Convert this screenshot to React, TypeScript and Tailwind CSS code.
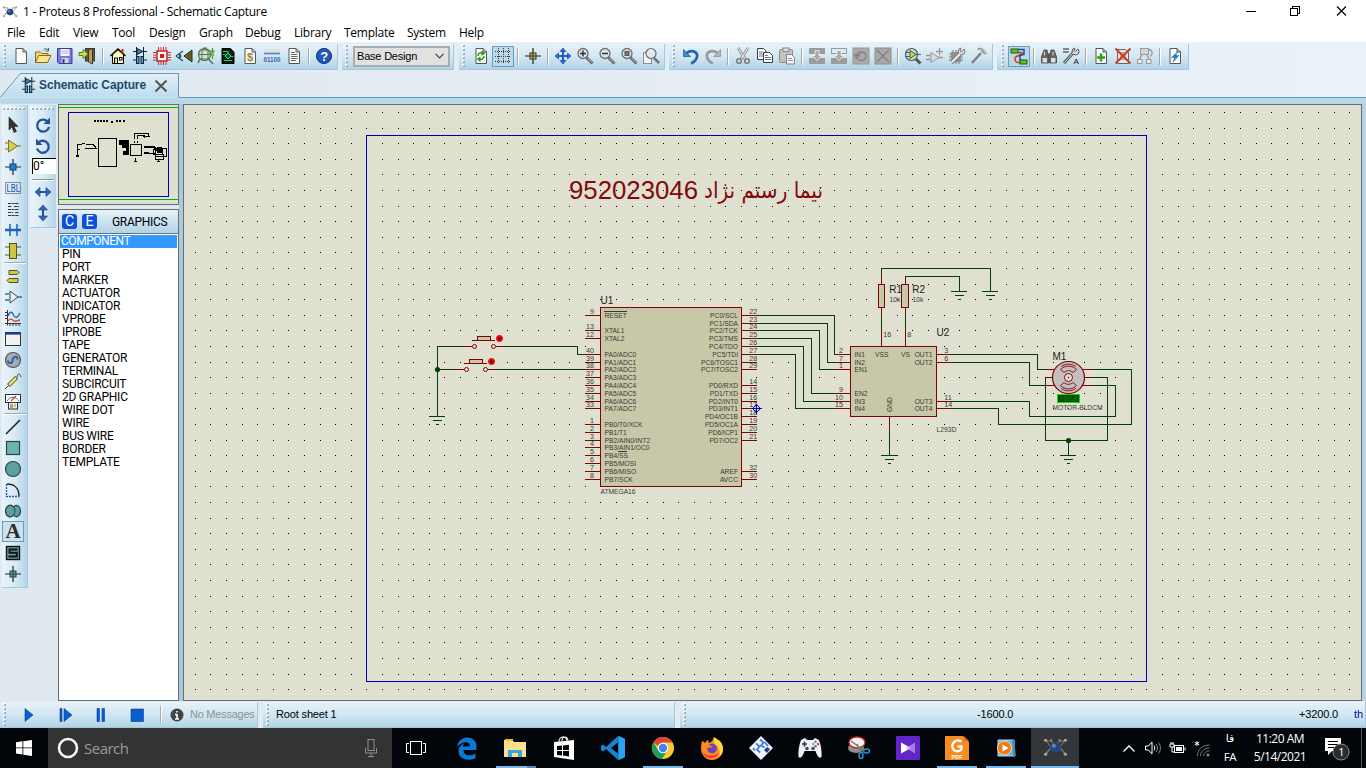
import React from "react";

type Kids = { children?: React.ReactNode };

function I({ children, s = 18 }: Kids & { s?: number }) {
  return (
    <svg width={s} height={s} viewBox="0 0 18 18" fill="none" className="block shrink-0">
      {children}
    </svg>
  );
}

function Slot({ children, on }: Kids & { on?: boolean }) {
  return (
    <div
      className={
        on
          ? "flex h-[21px] w-[22px] shrink-0 items-center justify-center border border-[#6a9dbd] bg-[#bcd9ea]"
          : "flex h-[21px] w-[22px] shrink-0 items-center justify-center"
      }
    >
      {children}
    </div>
  );
}

function Sep({ wide }: { wide?: boolean }) {
  return (
    <div className={wide ? "flex w-[9px] shrink-0 justify-center" : "flex w-2 shrink-0 justify-center"}>
      <div className="h-[17px] w-px bg-[#a6a9ab]" />
      <div className="h-[17px] w-px bg-white" />
    </div>
  );
}

function Grip({ h = 26 }: { h?: number }) {
  const n = Math.floor(h / 4);
  return (
    <svg width="4" height={h} className="block shrink-0" shapeRendering="crispEdges">
      {Array.from({ length: n }, (_, i) => (
        <g key={i}>
          <rect x="0" y={i * 4 + 1} width="2" height="2" fill="#fff" />
          <rect x="1" y={i * 4 + 2} width="2" height="2" fill="#9fb4c2" />
        </g>
      ))}
    </svg>
  );
}

function HGrip() {
  return (
    <svg width="24" height="4" className="block shrink-0" shapeRendering="crispEdges">
      {Array.from({ length: 6 }, (_, i) => (
        <g key={i}>
          <rect x={i * 4} y="0" width="2" height="2" fill="#fff" />
          <rect x={i * 4 + 1} y="1" width="2" height="2" fill="#9fb4c2" />
        </g>
      ))}
    </svg>
  );
}

function Bar({ children, className }: Kids & { className: string }) {
  return (
    <div
      className={
        "flex h-[26px] shrink-0 items-center border-r border-b border-[#a5c8de] bg-linear-to-b from-[#e6f2f9] via-[#d3e7f2] to-[#b2d3e6] " +
        className
      }
    >
      {children}
    </div>
  );
}

const page = (
  <path d="M4 1.5h7l3.500 3.500v11.500h-10.500zM11 1.500v3.500h3.500" fill="#fdfdfb" stroke="#555" />
);
const lens = (
  <>
    <path d="M10.500 10.500l6 6" stroke="#666" strokeWidth="3" />
    <path d="M11.500 11l4.500 4.500" stroke="#c9c1b0" strokeWidth="1" />
    <circle cx="7" cy="6.500" r="5" fill="#d9e3e6" stroke="#6a6f72" strokeWidth="1.300" />
  </>
);

const FileIcons = () => (
  <>
    <Slot><I>{page}</I></Slot>
    <Slot>
      <I>
        <path d="M1.500 15.500V5h5l1.500 1.500h6v3" fill="#f5d675" stroke="#8a6d1c" />
        <path d="M1.500 15.500l3-7h12.500l-3.500 7z" fill="#ffe48a" stroke="#8a6d1c" />
        <path d="M9 3.500c2-2.500 4.500-2 5.500 0M14.500 1v3h-3" stroke="#555" />
      </I>
    </Slot>
    <Slot>
      <I>
        <path d="M1.500 1.500h14.500v15h-13l-1.500-1.500z" fill="#7a78d8" stroke="#3d3b8f" />
        <rect x="4.500" y="2" width="9" height="7" fill="#f3f3ff" />
        <path d="M5.500 4h7M5.500 6h7" stroke="#b6b6dc" />
        <rect x="5.500" y="11" width="7" height="5" fill="#d6d6e4" />
        <rect x="6.500" y="12" width="2" height="4" fill="#3d3b8f" />
      </I>
    </Slot>
    <Slot>
      <I>
        <rect x="7.500" y="1.500" width="9" height="12.500" fill="#5c5648" stroke="#3b382f" />
        <path d="M10.500 3l4-1.500v15.500l-4-2z" fill="#b89a54" stroke="#3b382f" />
        <path d="M1 5.500h4v-3l5 4.500-5 4.500v-3h-4z" fill="#c6e04e" stroke="#5f7b12" />
      </I>
    </Slot>
    <Sep wide />
    <Slot>
      <I>
        <path d="M3.500 8v8.500h11v-8.500l-5.500-5z" fill="#fffbe0" stroke="#000" />
        <path d="M1.500 9l7.500-7 7.500 7" stroke="#000" strokeWidth="1.400" />
        <path d="M4.500 8l4.500-4 4.500 4" stroke="#f6e94e" strokeWidth="1.300" />
        <path d="M13.500 2v4" stroke="#d02020" strokeWidth="2" />
        <rect x="5.500" y="11" width="3" height="5.500" fill="#f6e94e" stroke="#000" />
        <rect x="10.500" y="10.500" width="2.500" height="2.500" fill="#fff" stroke="#000" />
      </I>
    </Slot>
    <Slot><SchIcon /></Slot>
    <Slot>
      <I>
        <rect x="4" y="4" width="10" height="10" fill="#fff" stroke="#d01818" strokeWidth="1.500" />
        <rect x="7" y="7" width="4" height="4" fill="#e01818" />
        <path d="M5.500 3v-3M8 3v-3M10.500 3v-3M13 3v-3M5.500 18v-3M8 18v-3M10.500 18v-3M13 18v-3M0 5.500h3M0 8h3M0 10.500h3M0 13h3M15 5.500h3M15 8h3M15 10.500h3M15 13h3" stroke="#d01818" strokeWidth=".9" />
      </I>
    </Slot>
    <Slot>
      <I>
        <path d="M17 3v12l-8-6z" fill="#1a8a2c" stroke="#0a3f12" />
        <path d="M15.500 5.500v7l-4-3.500z" fill="#d62020" />
        <path d="M1 9l7-5M1 9l7 5" stroke="#24506a" strokeWidth="1.200" />
        <path d="M4.500 6.500c2 1 2 4 0 5z" fill="#2d8fc2" stroke="#24506a" />
      </I>
    </Slot>
    <Slot>
      <I>
        <circle cx="7.500" cy="7.500" r="6" fill="#cfe7cf" stroke="#4d6a4d" strokeWidth="1.200" />
        <path d="M1 7.500h13M5 3v9h6v-9zM7 0v3M9 0v3" stroke="#5a735a" />
        <path d="M11.500 12l4.500 5M3 12l-2 4" stroke="#5a735a" strokeWidth="1.600" />
        <path d="M15.500 1v11M13 4h5" stroke="#2f8a2f" />
        <rect x="14" y="5" width="3" height="4" fill="#6fbf4f" />
      </I>
    </Slot>
    <Slot>
      <I>
        <path d="M3 1.500h8.500l3.500 3.500v11.500h-12z" fill="#101810" stroke="#000" />
        <path d="M4 4.500h5M4 7.500h2.500M11.500 9.500h3M5 13.500h8M9 4v2" stroke="#13e03b" strokeWidth="1.200" />
        <path d="M9 6l3 3-3 3-3-3z" stroke="#13e0c0" fill="#0b5a2a" />
      </I>
    </Slot>
    <Slot>
      <I>
        {page}
        <text x="6" y="14" fontSize="11" fontWeight="700" fill="#93822f" fontFamily="Liberation Sans, sans-serif">$</text>
      </I>
    </Slot>
    <Slot>
      <I>
        <rect x="1" y="2" width="16" height="4" fill="#e2e2e2" />
        <path d="M1 6.500h16" stroke="#4a7fd0" strokeWidth="1.600" />
        <text x="0.500" y="14.500" fontSize="6.500" fontWeight="700" fill="#3763b4" textLength="17" lengthAdjust="spacingAndGlyphs" fontFamily="Liberation Sans, sans-serif">01100</text>
      </I>
    </Slot>
    <Slot>
      <I>
        {page}
        <path d="M6 5.500h4M6 7.500h6.500M6 9.500h6.500M6 11.500h6.500M6 13.500h5" stroke="#666" />
      </I>
    </Slot>
    <Sep />
    <Slot>
      <I>
        <circle cx="9" cy="9" r="7.600" fill="#2456b8" stroke="#173c86" />
        <text x="5.200" y="13.600" fontSize="13" fontWeight="700" fill="#fff" fontFamily="Liberation Sans, sans-serif">?</text>
      </I>
    </Slot>
  </>
);

const schGlyph = (
  <>
    <path d="M2 4.500h14M5.500 0v9M12.500 0v9" stroke="#222" />
    <path d="M6 1.500v6l6-3z" fill="#2f86c8" stroke="#123" />
    <path d="M2 13h4M12 13h4" stroke="#222" />
    <rect x="5.500" y="9.500" width="2.500" height="7" fill="#49a2dc" stroke="#123" />
    <rect x="10" y="9.500" width="2.500" height="7" fill="#49a2dc" stroke="#123" />
  </>
);

function SchIcon() {
  return <I>{schGlyph}</I>;
}

const ViewIcons = () => (
  <>
    <Slot>
      <I>
        {page}
        <path d="M6 9c0-3 3-4 5-2.500M12 9c0 3-3 4.500-5 2.500" stroke="#2c9a24" strokeWidth="1.600" />
        <path d="M9.500 3.500l4 3-4 2.500zM8.500 9.500l-4 2.500 4 3z" fill="#2c9a24" />
      </I>
    </Slot>
    <Slot on>
      <I>
        <g stroke="#33404a" strokeDasharray="1 1">
          <path d="M1 4.500h16M1 9.500h16M1 14.500h16M4.500 1v16M9.500 1v16M14.500 1v16" />
        </g>
      </I>
    </Slot>
    <Sep />
    <Slot>
      <I>
        <path d="M1 9h16M9 1v16" stroke="#222" strokeWidth="1.200" />
        <rect x="6" y="6" width="6" height="6" fill="#c9c33a" stroke="#333" />
        <path d="M6 9h6M9 6v6" stroke="#333" />
      </I>
    </Slot>
    <Sep />
    <Slot>
      <I>
        <path d="M9 2v14M2 9h14" stroke="#1d5fd0" strokeWidth="2" />
        <path d="M9 1l3 3.500h-6zM9 17l3-3.500h-6zM1 9l3.500-3v6zM17 9l-3.500-3v6z" fill="#2b6fe0" stroke="#123f94" strokeWidth=".6" />
      </I>
    </Slot>
    <Slot><I>{lens}<path d="M4 6.500h6M7 3.500v6" stroke="#333" strokeWidth="1.500" /></I></Slot>
    <Slot><I>{lens}<path d="M4 6.500h6" stroke="#333" strokeWidth="1.500" /></I></Slot>
    <Slot><I>{lens}<rect x="5" y="4.500" width="4" height="4" fill="#777" stroke="#555" /></I></Slot>
    <Slot>
      <I>
        <rect x="1.500" y="5.500" width="8" height="11" fill="#f4f4f4" stroke="#333" strokeDasharray="1 1" />
        <path d="M12 11l5 5" stroke="#777" strokeWidth="2.500" />
        <circle cx="9" cy="6.500" r="5" fill="#e3eaec" stroke="#6a6f72" strokeWidth="1.200" />
      </I>
    </Slot>
  </>
);

const EditIcons = () => (
  <>
    <Slot>
      <I>
        <path d="M4 7c4-5 12-3 11 3-.5 3-3 5-6 6.500" stroke="#2467b0" strokeWidth="2.700" />
        <path d="M1.500 2.500v7h7z" fill="#3f8ad2" stroke="#1b4f8e" strokeWidth=".7" />
      </I>
    </Slot>
    <Slot>
      <I>
        <path d="M14 7c-4-5-12-3-11 3 .5 3 3 5 6 6.500" stroke="#9a9a9a" strokeWidth="2.700" />
        <path d="M16.500 2.500v7h-7z" fill="#b4b4b4" stroke="#8c8c8c" strokeWidth=".7" />
      </I>
    </Slot>
    <Sep />
    <Slot>
      <I>
        <path d="M4 1l7 11M14 1l-7 11" stroke="#858585" strokeWidth="2.600" />
        <path d="M4 1l7 11M14 1l-7 11" stroke="#e8e8e8" strokeWidth="1.200" />
        <circle cx="5" cy="14" r="2.300" stroke="#808080" strokeWidth="1.600" />
        <circle cx="13" cy="14" r="2.300" stroke="#808080" strokeWidth="1.600" />
      </I>
    </Slot>
    <Slot>
      <I>
        <path d="M1.500 1.500h6l2.500 2.500v8.500h-8.500z" fill="#fff" stroke="#34404e" />
        <path d="M3 5h4M3 7h5M3 9h5" stroke="#6c7885" />
        <path d="M7.500 5.500h6l3 3v7h-9z" fill="#fff" stroke="#34404e" />
        <path d="M9 8.500h3M9 10.500h6M9 12.500h6" stroke="#6c7885" />
      </I>
    </Slot>
    <Slot>
      <I>
        <rect x="1.500" y="2.500" width="13" height="13" rx="1" fill="#c2c2c2" stroke="#8a8a8a" />
        <rect x="5" y="1" width="6" height="3.500" fill="#ddd" stroke="#888" />
        <path d="M8.500 7.500h5l3 3v6.500h-8z" fill="#f3f3f3" stroke="#888" />
        <path d="M10 11.500h4M10 13.500h5" stroke="#999" />
      </I>
    </Slot>
    <Sep />
    <Slot>
      <I>
        <path d="M1 1h16v6h-16zM1 11h16v6h-16z" fill="#9b9b9b" />
        <path d="M7 3.500h4v5h3l-5 5-5-5h3z" fill="#a8a8a8" stroke="#eee" strokeWidth=".9" />
      </I>
    </Slot>
    <Slot>
      <I>
        <path d="M1.500 1.500h15v5h-15z" stroke="#999" />
        <path d="M1 11h16v6h-16z" fill="#9b9b9b" />
        <path d="M7 3.500h4v5h3l-5 5-5-5h3z" fill="#a8a8a8" stroke="#eee" strokeWidth=".9" />
      </I>
    </Slot>
    <Slot>
      <I>
        <rect x="1" y="1" width="16" height="16" fill="#a9a9a9" stroke="#999" />
        <path d="M5 9c0-5 9-5 9 0s-6 5-8 3.500M2.500 8h5l-2.500 3.500z" stroke="#828282" strokeWidth="1.300" />
      </I>
    </Slot>
    <Slot>
      <I>
        <rect x="1" y="1" width="16" height="16" fill="#a9a9a9" stroke="#8c8c8c" />
        <path d="M3 3l12 12M15 3l-12 12" stroke="#808080" strokeWidth="1.300" />
      </I>
    </Slot>
    <Sep />
    <Slot>
      <I>
        <path d="M11.500 11.500l5 5" stroke="#555" strokeWidth="3" />
        <circle cx="7.500" cy="7.500" r="6" fill="#c3dfe4" stroke="#4a6068" strokeWidth="1.200" />
        <path d="M6 3.500v8l6-4z" fill="#d8cf50" stroke="#5f5a1a" />
        <path d="M1 5.500h5M1 9.500h5M12 7.500h5" stroke="#44606a" />
      </I>
    </Slot>
    <Slot>
      <I>
        <path d="M5 5.500v10l8-5z" fill="#ddd" stroke="#999" />
        <path d="M0 8.500h5M0 12.500h5M12 10.500h5M13.500 1v7M10 4.500h7" stroke="#999" strokeWidth="1.300" />
      </I>
    </Slot>
    <Slot>
      <I>
        <rect x="3" y="5" width="10" height="10" fill="#8d8d8d" />
        <path d="M1 7h2M1 10h2M1 13h2M13 10h2M13 13h2M5 15v2M8 15v2M11 15v2M5 3v2M8 3v2" stroke="#777" />
        <path d="M4 15l8-8" stroke="#777" strokeWidth="4" />
        <path d="M16 2l-2.500 3-1.500-1 1-3a3.500 3.500 0 1 0 4 3z" fill="#ddd" stroke="#777" />
        <path d="M4 15l8-8" stroke="#eee" strokeWidth="2.200" />
      </I>
    </Slot>
    <Slot>
      <I>
        <path d="M2 16l9-10" stroke="#7f7f7f" strokeWidth="2.400" />
        <path d="M8 2.500c3-1.500 5-.5 8 4.500M11 2l3.500 4" stroke="#8a8a8a" strokeWidth="2.300" />
        <path d="M9 2.500c3-1 4 0 7 4" stroke="#ddd" />
      </I>
    </Slot>
  </>
);

const ToolIcons = () => (
  <>
    <Slot on>
      <I>
        <path d="M8 5.500h3c3 0 2 3 0 3s-6 0-6 3.500 2 3.500 5 3.500" stroke="#d43b12" strokeWidth="1.500" />
        <path d="M8 2.500h6v5h-4v6h3" stroke="#1452b0" strokeWidth="1.500" />
        <rect x="1" y="2" width="7" height="4" fill="#5fc02d" stroke="#1d5c0c" />
        <rect x="10" y="13" width="7" height="4" fill="#5fc02d" stroke="#1d5c0c" />
      </I>
    </Slot>
    <Sep />
    <Slot>
      <I>
        <path d="M4 3h3l1.500 7v6h-7v-6zM11 3h3l2.500 7v6h-7v-6z" fill="#666" stroke="#444" strokeWidth=".8" />
        <path d="M7.500 6.500h3v4h-3z" fill="#555" />
        <rect x="2.500" y="11" width="4.500" height="4.500" fill="#ddd" />
        <rect x="11" y="11" width="4.500" height="4.500" fill="#ddd" />
        <path d="M4.500 4.500v4M13 4.500v4" stroke="#ddd" />
      </I>
    </Slot>
    <Slot>
      <I>
        <path d="M1 2h6M1 5h6" stroke="#222" strokeWidth="1.200" />
        <path d="M2 16l9-10" stroke="#555" strokeWidth="3" />
        <path d="M16 2l-2.500 2.500-1.500-1 1-2.500a3.500 3.500 0 1 0 4 3z" fill="#ddd" stroke="#555" />
        <path d="M2.500 15.500l9-10" stroke="#e4e4e4" />
        <text x="11.500" y="17" fontSize="8" fill="#111" fontFamily="Liberation Sans, sans-serif">A</text>
      </I>
    </Slot>
    <Sep />
    <Slot><I>{page}<path d="M9 6.500v8M5 10.500h8" stroke="#2fa01a" strokeWidth="2.600" /></I></Slot>
    <Slot>
      <I>
        <path d="M3.500 2.500h8l3 3v11h-11z" fill="#e8e8e8" stroke="#666" />
        <path d="M6 6h5M6 9h6M6 12h6" stroke="#777" />
        <path d="M1.500 1.500l15 15M16.500 1.500l-15 15" stroke="#cf3b22" strokeWidth="2" />
      </I>
    </Slot>
    <Slot>
      <I>
        <rect x="4.500" y="1.500" width="8" height="6" fill="#d5d5d5" stroke="#999" />
        <rect x="1.500" y="12.500" width="4.500" height="4" fill="#eee" stroke="#999" />
        <rect x="10.500" y="12.500" width="4.500" height="4" fill="#eee" stroke="#999" />
        <path d="M6 8l-2.500 4M11 8l2 4M13 2.500c4 1 4 5 1 7" stroke="#999" strokeWidth="1.300" />
      </I>
    </Slot>
    <Sep />
    <Slot><I>{page}<path d="M12 4.500l-6.500 6h3.500l-2 4.500 6-6.500h-3.500z" fill="#1f7fd8" stroke="#1565b0" strokeWidth=".5" /></I></Slot>
  </>
);

function VSlot({ children, on }: Kids & { on?: boolean }) {
  return (
    <div className={on ? "flex h-[21px] w-[22px] items-center justify-center border border-[#6a9dbd] bg-[#cbe1ee]" : "flex h-[21px] w-[22px] items-center justify-center"}>
      {children}
    </div>
  );
}
const VSep = () => (
  <div className="flex h-1 w-full flex-col justify-center pl-0.5">
    <div className="h-px w-[22px] bg-[#a6a9ab]" />
    <div className="h-px w-[22px] bg-white" />
  </div>
);

const teal = "#5f9f9f";
const ModeBar = () => (
  <div className="ml-0.5 flex h-[483px] w-[26px] flex-col items-start border-r border-b border-[#a5c8de] bg-linear-to-r from-[#eaf4fa] via-[#d8eaf4] to-[#b4d5e9] pt-[2px]">
    <HGrip />
    <div className="h-[3px]" />
    <VSlot><I><path d="M5 1v13l3-3 2 5.500 2.500-1-2.500-5h4z" fill="#333" stroke="#222" strokeWidth=".6" /></I></VSlot>
    <VSlot><I><path d="M4.500 3v12l9-6z" fill="#d8cf50" stroke="#7b7420" /><path d="M1 6h4M1 12h4M13 9h4" stroke="#7b7420" strokeWidth="1.200" /></I></VSlot>
    <VSlot><I><path d="M1 9h16M9 1v16" stroke="#1d2d3a" strokeWidth="1.200" /><rect x="6" y="6" width="6" height="6" fill="#2d7bd0" stroke="#123f80" /></I></VSlot>
    <VSlot>
      <I>
        <rect x="1.500" y="3.500" width="15" height="11" stroke="#333" strokeDasharray="1 1" />
        <text x="2.500" y="13" fontSize="10.500" fill="#1454a8" textLength="13.500" lengthAdjust="spacingAndGlyphs" fontFamily="Roboto, sans-serif">LBL</text>
      </I>
    </VSlot>
    <VSlot><I><path d="M4 3.500h11M4 6.500h4M10 6.500h5M4 9.500h11M4 12.500h5M11 12.500h4M4 15.500h11" stroke="#333" strokeDasharray="3 .6" /></I></VSlot>
    <VSlot><I><path d="M1 9h16" stroke="#1c63b4" strokeWidth="2.500" /><path d="M6 3v6M13 3v6M6 9v6M13 9v6" stroke="#1c63b4" strokeWidth="1.500" /></I></VSlot>
    <VSlot><I><rect x="5.500" y="1.500" width="7" height="15" fill="#cdc548" stroke="#56521c" /><path d="M1 5h4M1 13h4M13 5h4M13 13h4" stroke="#56521c" /></I></VSlot>
    <VSep />
    <VSlot><I><path d="M5 3.500h8l2 2-2 2h-8zM14 11.500h-9l-2 2 2 2h9z" fill="#d2ca45" stroke="#56521c" /></I></VSlot>
    <VSlot><I><path d="M6 3v12l8-6z" fill="#e9eef2" stroke="#445" /><path d="M1 6h4M1 12h4M14 9h4" stroke="#1a8585" strokeWidth="1.300" /></I></VSlot>
    <VSlot>
      <I>
        <path d="M3.500 1v15.500M1 14.500h16" stroke="#333" />
        <path d="M1 3.500h2M1 6.500h2M1 9.500h2M6 17v-2M9 17v-2M12 17v-2M15 17v-2" stroke="#333" />
        <path d="M4 7c2-5 4-5 6 0 2 3 4 1 6-3" stroke="#1f5fb8" strokeWidth="1.300" />
        <path d="M4 12c2-3 4-2 6 0 2 1 4-1 6-1" stroke="#cf4a2c" strokeWidth="1.300" />
      </I>
    </VSlot>
    <VSlot><I><rect x="1.500" y="2.500" width="15" height="13" fill="#f1f1f1" stroke="#333" /><path d="M1 3.500h16" stroke="#123f94" strokeWidth="2.200" /></I></VSlot>
    <VSlot><I><circle cx="9" cy="9" r="7.500" fill="#a7aab4" stroke="#555" strokeWidth="1.200" /><path d="M4 9.500c0 3.500 4.500 3.500 4.500 0s5-6 5-1" stroke="#1f5fb8" strokeWidth="1.800" /></I></VSlot>
    <VSlot><I><path d="M1 17l4-4M13 6c0-5 3-5 4-1" stroke="#444" /><path d="M4.500 13.500l8-8" stroke="#4d4a20" strokeWidth="4" /><path d="M5 13l7-7" stroke="#e9e270" strokeWidth="2.500" /></I></VSlot>
    <VSlot>
      <I>
        <rect x="1.500" y="1.500" width="15" height="8" fill="#fff" stroke="#333" />
        <path d="M3 8c3-5 9-5 12 0" stroke="#2b7bc8" /><path d="M7 8l5-5" stroke="#d03a20" strokeWidth="1.300" />
        <rect x="4.500" y="9.500" width="9" height="6.500" fill="#eee" stroke="#333" />
        <path d="M6 12h3M6 14h3" stroke="#555" /><rect x="10" y="11" width="2" height="3" fill="#e0c030" />
      </I>
    </VSlot>
    <VSep />
    <VSlot><I><path d="M2 16l14-14" stroke="#222" strokeWidth="1.600" /></I></VSlot>
    <VSlot><I><rect x="2.500" y="2.500" width="13" height="13" fill="#6fb3ad" stroke="#24494a" strokeWidth="1.200" /></I></VSlot>
    <VSlot><I><circle cx="9" cy="9" r="7.500" fill={teal} stroke="#24494a" strokeWidth="1.200" /></I></VSlot>
    <VSlot><I><path d="M3 3c7 0 12 4 12 12" stroke="#222" strokeWidth="1.400" /><path d="M2.500 3v12.500h13" stroke="#1f5fb8" strokeWidth="1.400" strokeDasharray="2 1" /></I></VSlot>
    <VSlot><I><path d="M9.500 5c-3-4-8-1-8 4s5 8 8 4c2.500 3.500 7 1 7-4s-4.500-7.500-7-4z" fill={teal} stroke="#24494a" strokeWidth="1.200" /><path d="M9.500 5c2 2 2 6 0 8" stroke="#24494a" /></I></VSlot>
    <VSlot on><span className="font-['Liberation_Serif',serif] text-[21px] leading-none font-bold text-[#2b2b2b]">A</span></VSlot>
    <VSlot><I><rect x="2.500" y="2.500" width="13" height="13" fill={teal} stroke="#111" strokeWidth="1.400" /><path d="M13.500 5.500h-8v3.300h7.300v3.700h-8.300" stroke="#111" strokeWidth="1.900" /></I></VSlot>
    <VSlot><I><path d="M1 9h16M9 1v16" stroke="#222" strokeWidth="1.200" /><rect x="6" y="6" width="6" height="6" fill={teal} stroke="#24494a" /><path d="M6 9h6M9 6v6" stroke="#24494a" /></I></VSlot>
  </div>
);

const RotateBar = () => (
  <div className="ml-0.5 flex h-[123px] w-[26px] flex-col items-center border-b border-[#a5c8de] bg-linear-to-r from-[#eaf4fa] via-[#d8eaf4] to-[#b4d5e9] pt-[2px]">
    <HGrip />
    <div className="h-[3px]" />
    <VSlot><I><path d="M13.500 5.500a6 6 0 1 0 1.500 5.500" stroke="#24509c" strokeWidth="2.300" /><path d="M16 1.500v6.500h-6.500z" fill="#24509c" /></I></VSlot>
    <VSlot><I><path d="M4.500 5.500a6 6 0 1 1-1.500 6" stroke="#24509c" strokeWidth="2.300" /><path d="M2 1.500v6.500h6.500z" fill="#24509c" /></I></VSlot>
    <div className="mt-0.5 ml-0.5 h-4 w-6 border-t border-l border-black bg-white font-['Roboto',sans-serif] text-[12px] leading-[15px]">0°</div>
    <div className="mt-[5px] h-px w-[22px] bg-[#8f9396]" />
    <div className="h-px w-[22px] bg-white" />
    <VSlot><I><path d="M4 9h10" stroke="#24509c" strokeWidth="2" /><path d="M1 9l5-4.500v9zM17 9l-5-4.500v9z" fill="#2f66c0" stroke="#1a3d80" strokeWidth=".6" /></I></VSlot>
    <VSlot><I><path d="M9 4v10" stroke="#24509c" strokeWidth="2" /><path d="M9 1l4.500 5h-9zM9 17l4.500-5h-9z" fill="#2f66c0" stroke="#1a3d80" strokeWidth=".6" /></I></VSlot>
  </div>
);

const Overview = () => (
  <svg width="119" height="99" viewBox="59 105 119 99" className="block" shapeRendering="crispEdges" fill="none">
    <rect x="59" y="105" width="119" height="99" fill="#e0e0d0" />
    <path d="M59 107.500h119M59 199.500h119" stroke="#00b400" />
    <rect x="68.500" y="112.500" width="100" height="84" stroke="#0000b4" />
    <path d="M94 120.500h15M111 121.500h3M116 120.500h5M123 120.500h3" stroke="#000" strokeWidth="2" strokeDasharray="2 1" />
    <rect x="98.500" y="138.500" width="18" height="28" stroke="#000" />
    <path d="M77.500 157v-13h4M86 144.500h7l3 3M77 149.500h3M85 148.500h12M82 143.500h3" stroke="#000" />
    <rect x="76" y="155" width="3" height="2" fill="#000" />
    <path d="M119 140h10v15h-6v-4h3v-3h-4v-3h-3z" fill="#000" />
    <rect x="130.500" y="144.500" width="11" height="11" stroke="#000" />
    <path d="M134.500 139v-6h14v4M137.500 139v-4h7v3M134.500 141v2M137.500 141v2M135.500 158v4M134 161.500h3M143 136.500h7" stroke="#000" />
    <path d="M144 147h10l2 3h4M144 153h5" stroke="#000" strokeWidth="2" />
    <path d="M149 153.500h6" stroke="#000" />
    <rect x="155.500" y="148.500" width="11" height="8" stroke="#000" />
    <rect x="153.500" y="149.500" width="9" height="5" stroke="#000" />
    <rect x="157" y="147" width="5" height="6" fill="#000" />
    <path d="M155.500 154v5h8v-5M158.500 159v3M157 161.500h3" stroke="#000" />
  </svg>
);

const objects = ["COMPONENT", "PIN", "PORT", "MARKER", "ACTUATOR", "INDICATOR", "VPROBE", "IPROBE", "TAPE", "GENERATOR", "TERMINAL", "SUBCIRCUIT", "2D GRAPHIC", "WIRE DOT", "WIRE", "BUS WIRE", "BORDER", "TEMPLATE"];

/* ---------- schematic ---------- */
const RED = "#7d0505";
const GREEN = "#044004";
const INK = "#3a3a33";

const gy = (k: number) => Math.floor(315.25 + 7.8 * k);

const dots = (() => {
  let d = "";
  for (let i = -11; i <= 63; i++)
    for (let j = 0; j <= 37; j++)
      d += `M${Math.floor(366.8 + i * 15.6)} ${Math.floor(112.45 + j * 15.6)}h1v1h-1z`;
  return d;
})();

type Pin = [number, string, string];
const left: Pin[] = [
  [0, "9", "RESET"], [2, "13", "XTAL1"], [3, "12", "XTAL2"],
  [5, "40", "PA0/ADC0"], [6, "39", "PA1/ADC1"], [7, "38", "PA2/ADC2"], [8, "37", "PA3/ADC3"],
  [9, "36", "PA4/ADC4"], [10, "35", "PA5/ADC5"], [11, "34", "PA6/ADC6"], [12, "33", "PA7/ADC7"],
  [14, "1", "PB0/T0/XCK"], [15, "2", "PB1/T1"], [16, "3", "PB2/AIN0/INT2"], [17, "4", "PB3/AIN1/OC0"],
  [18, "5", "PB4/SS"], [19, "6", "PB5/MOSI"], [20, "7", "PB6/MISO"], [21, "8", "PB7/SCK"],
];
const right: Pin[] = [
  [0, "22", "PC0/SCL"], [1, "23", "PC1/SDA"], [2, "24", "PC2/TCK"], [3, "25", "PC3/TMS"],
  [4, "26", "PC4/TDO"], [5, "27", "PC5/TDI"], [6, "28", "PC6/TOSC1"], [7, "29", "PC7/TOSC2"],
  [9, "14", "PD0/RXD"], [10, "15", "PD1/TXD"], [11, "16", "PD2/INT0"], [12, "17", "PD3/INT1"],
  [13, "18", "PD4/OC1B"], [14, "19", "PD5/OC1A"], [15, "20", "PD6/ICP1"], [16, "21", "PD7/OC2"],
  [20, "32", "AREF"], [21, "30", "AVCC"],
];
const l293: Pin[] = [[5, "2", "IN1"], [6, "7", "IN2"], [7, "1", "EN1"], [10, "9", "EN2"], [11, "10", "IN3"], [12, "15", "IN4"]];
const r293: Pin[] = [[5, "3", "OUT1"], [6, "6", "OUT2"], [11, "11", "OUT3"], [12, "14", "OUT4"]];

function Gnd({ x, y }: { x: number; y: number }) {
  return <path d={`M${x - 8} ${y + 0.5}h16M${x - 4} ${y + 4.5}h9M${x - 1} ${y + 8.5}h3`} stroke={GREEN} />;
}

function PushButton({ x, y }: { x: number; y: number }) {
  return (
    <g stroke={RED}>
      <path d={`M${x - 11} ${y + 0.5}h9M${x + 22} ${y + 0.5}h8M${x - 2} ${y - 5.5}h23`} />
      <rect x={x + 3.5} y={y - 9.5} width="13" height="4" fill="#c8c8a9" />
      <g shapeRendering="auto">
        <circle cx={x + 0.5} cy={y + 0.5} r="2" fill="#e4e0d0" />
        <circle cx={x + 19.5} cy={y + 0.5} r="2" fill="#e4e0d0" />
        <circle cx={x + 25.5} cy={y - 7.5} r="3" fill="#f01010" stroke="#e00000" />
        <circle cx={x + 25.5} cy={y - 7.5} r="1.4" fill="#500" stroke="none" />
      </g>
    </g>
  );
}

const Schematic = () => (
  <svg width="1177" height="595" viewBox="184 105 1177 595" className="block" fill="none" shapeRendering="crispEdges" fontFamily="Liberation Sans, Arial, sans-serif">
    <rect x="184" y="105" width="1177" height="595" fill="#e0e0d0" />
    <path d={dots} fill="#000" />
    <rect x="366.500" y="135.500" width="780" height="546" stroke="#0000b4" />
    <text x="569" y="199" fontSize="26" fill="#82080c" textLength="129" lengthAdjust="spacingAndGlyphs">952023046</text>
    <text x="823" y="198" fontSize="23" fill="#82080c" direction="rtl" textLength="119" lengthAdjust="spacingAndGlyphs" fontFamily="DejaVu Sans, sans-serif">نیما رستم نژاد</text>

    <g stroke={GREEN}>
      <path d="M464 346.500H437.500V416M437 369.500H456M504 346.500H577.500V354.500H585M496 369.500H585" />
      <path d="M757 315.500H834.500V354.500M757 323.500H827.500V362.500H835M757 330.500H819.500V369.500H835M757 338.500H811.500V393.500H835M757 346.500H803.500V401.500H835M757 354.500H795.500V408.500H835" />
      <path d="M881.500 276V268.500H990.500V291M905 276.500H959.500V291M881.500 315V330M905.500 315V330M889.500 431V455" />
      <path d="M951 354.500H1037.500V369.500H1045M951 362.500H1029.500V385.500H1045M951 401.500H1029.500V416.500H1115.500V385.500H1093M951 408.500H998.500V424.500H1131.500V369.500H1093M1046 377.500H1045.500V440.500H1107.500V377.500H1093M1068.500 440V455" />
    </g>
    <Gnd x={437} y={416} /><Gnd x={959} y={291} /><Gnd x={990} y={291} /><Gnd x={889} y={455} /><Gnd x={1068} y={455} />
    <g shapeRendering="auto" fill={GREEN}>
      <circle cx="437.500" cy="369.500" r="2.600" /><circle cx="1068.500" cy="440.500" r="2.600" />
    </g>
    <PushButton x={474} y={346} />
    <PushButton x={466} y={369} />

    <g stroke={RED}>
      <rect x="600.500" y="307.500" width="141" height="179" fill="#c8c8a9" />
      <rect x="850.500" y="346.500" width="86" height="70" fill="#c8c8a9" />
      {left.map(([k]) => <path key={k} d={`M585 ${gy(k) + 0.5}h15`} />)}
      {right.map(([k]) => <path key={k} d={`M742 ${gy(k) + 0.5}h15`} />)}
      {l293.map(([k]) => <path key={k} d={`M835 ${gy(k) + 0.5}h15`} />)}
      {r293.map(([k]) => <path key={k} d={`M937 ${gy(k) + 0.5}h15`} />)}
      <path d="M881.500 276v8M905.500 276v8M881.500 307v8M905.500 307v8M881.500 330v16M905.500 330v16M889.500 417v14" />
      <rect x="878.500" y="284.500" width="6" height="23" fill="#c8c8a9" />
      <rect x="901.500" y="284.500" width="7" height="23" fill="#c8c8a9" />
      <path d="M1045 369.500h10M1045 377.500h8M1045 385.500h10M1083 369.500h10M1084 377.500h9M1083 385.500h10" />
    </g>

    <g fontSize="6.700" fill={INK}>
      {left.map(([k, n, t]) => (
        <g key={k}>
          <text x="594" y={gy(k) - 0.8} textAnchor="end" fontSize="7.200">{n}</text>
          <text x="604.500" y={gy(k) + 3}>{t}</text>
        </g>
      ))}
      {right.map(([k, n, t]) => (
        <g key={k}>
          <text x="757.300" y={gy(k) - 0.8} textAnchor="end" fontSize="7.200">{n}</text>
          <text x="738" y={gy(k) + 3} textAnchor="end">{t}</text>
        </g>
      ))}
      {l293.map(([k, n, t]) => (
        <g key={k}>
          <text x="843" y={gy(k) - 0.8} textAnchor="end" fontSize="7.200">{n}</text>
          <text x="854.500" y={gy(k) + 3}>{t}</text>
        </g>
      ))}
      {r293.map(([k, n, t]) => (
        <g key={k}>
          <text x="944.300" y={gy(k) - 0.8} fontSize="7.200">{n}</text>
          <text x="932.500" y={gy(k) + 3} textAnchor="end">{t}</text>
        </g>
      ))}
      <path d="M604 311.500h23M618 451.500h9" stroke={INK} />
      <text x="875" y="357">VSS</text>
      <text x="901" y="357">VS</text>
      <text x="883.300" y="336.700" fontSize="7.200">16</text>
      <text x="907.300" y="336.700" fontSize="7.200">8</text>
      <text transform="translate(892.300 412) rotate(-90)">GND</text>
      <text x="889.500" y="301.800">10k</text>
      <text x="912.500" y="301.800">10k</text>
      <text x="600.500" y="493.800" textLength="35">ATMEGA16</text>
      <text x="936.500" y="431.800" textLength="20">L293D</text>
      <text x="1052.500" y="410" textLength="50">MOTOR-BLDCM</text>
    </g>
    <g fontSize="10" fill="#1c1c18">
      <text x="600.500" y="304">U1</text>
      <text x="889.300" y="293">R1</text>
      <text x="912.300" y="293">R2</text>
      <text x="936.500" y="336">U2</text>
      <text x="1052.500" y="359.500">M1</text>
    </g>

    <g shapeRendering="auto" stroke={RED}>
      <circle cx="1068.500" cy="377.500" r="16" fill="#c4c0c2" strokeWidth="1.200" />
      <path d="M1060.500 369.500c4-4.500 12-4.500 16 0l-3.500 3c-3-2.500-6-2.500-9 0zM1060.500 385.500c4 4.500 12 4.500 16 0l-3.500-3c-3 2.500-6 2.500-9 0z" strokeWidth=".9" />
      <path d="M1061 366.500c4-3 11-3 15 0M1061 388.500c4 3 11 3 15 0" strokeWidth=".9" />
      <circle cx="1068.500" cy="377.500" r="4" fill="#e6e2da" />
      <path d="M1067.500 377.500h2M1068.500 376.500v2" strokeWidth=".6" />
    </g>
    <rect x="1057.500" y="394.500" width="22" height="8" fill="#064806" stroke="#0be00b" />
    <text x="1060" y="401" fontSize="6.700" fill="#138013" textLength="17">+88.8</text>
    <path d="M756.500 404.500l4 4-4 4-4-4zM752 408.500h10M756.500 404v10" stroke="#0000b4" shapeRendering="auto" />
  </svg>
);

/* ---------- taskbar ---------- */
function Task({ children, line }: Kids & { line?: boolean }) {
  return (
    <div className="relative flex h-10 w-[49px] shrink-0 items-center justify-center">
      {children}
      {line && <div className="absolute bottom-0 left-[5px] h-0.5 w-10 bg-[#76b9ed]" />}
    </div>
  );
}
const T = ({ children }: Kids) => (
  <svg width="24" height="24" viewBox="0 0 24 24" fill="none" className="block">{children}</svg>
);
const Atom = ({ s, dark }: { s: number; dark?: boolean }) => (
  <svg width={s} height={s} viewBox="0 0 24 24" fill="none" className="block">
    <g stroke={dark ? "#70757c" : "#8a8f96"} strokeWidth="1.100">
      <path d="M2 5c6 0 14 6 20 13M22 5c-6 0-14 6-20 13M3 4c3 8 6 9 9 9s7-3 9-9M3 19c3-6 6-7 9-7s7 2 9 7" />
    </g>
    <circle cx="12" cy="12" r="5" fill="#26457c" />
    <circle cx="10.500" cy="10.500" r="2" fill="#5b7fb8" />
    <g fill="#c9a268"><circle cx="2.500" cy="5" r="1.500" /><circle cx="21.500" cy="5" r="1.500" /><circle cx="2.500" cy="18.500" r="1.500" /><circle cx="21.500" cy="18.500" r="1.500" /><circle cx="8" cy="5" r="1" /><circle cx="16" cy="5" r="1" /></g>
  </svg>
);

const Taskbar = () => (
  <div className="flex h-10 w-full shrink-0 items-center bg-[#020509] font-['Open_Sans',sans-serif] text-white">
    <div className="flex w-12 shrink-0 justify-center">
      <svg width="16" height="16" viewBox="0 0 16 16" fill="#fff"><path d="M0 2.200l6.500-.9v6.200h-6.500zM7.300 1.200l8.700-1.200v7.500h-8.700zM0 8.300h6.500v6.200l-6.500-.9zM7.300 8.300h8.700v7.600l-8.700-1.200z" /></svg>
    </div>
    <div className="flex h-10 w-[344px] shrink-0 items-center bg-[#333333] pl-[9px]">
      <svg width="22" height="22" viewBox="0 0 22 22"><circle cx="11" cy="11" r="9" fill="none" stroke="#f4f4f4" strokeWidth="2.600" /></svg>
      <span className="ml-[5px] text-[15px] leading-5 tracking-[-0.5px] text-[#9b9b9b]">Search</span>
      <svg width="12" height="18" viewBox="0 0 12 18" fill="none" stroke="#8f8f8f" className="mr-[15px] ml-auto"><rect x="3" y=".5" width="6" height="11" /><path d="M.5 9v5h11v-5M6 14v3M3 17.500h6" /></svg>
    </div>
    <Task>
      <svg width="20" height="16" viewBox="0 0 20 16" fill="none" stroke="#fff" className="mr-px"><rect x="4.500" y="1.500" width="11" height="13" /><path d="M3 3.500h-2.500v9h2.500M17 3.500h2.500v9h-2.500" /></svg>
    </Task>
    <Task>
      <T><path d="M3 11C4 4 9 1.500 13.500 1.500c6 0 9 4.500 9 9.500v3h-13c0 6 7 6.500 12 3.500v4.500c-6 3.500-17 2-17-7 0-4 2.500-6.500 6-7.800-1 1-1.700 2-2 3.300h7.500c0-6-8.500-5.500-13 .5z" fill="#0b78d4" /></T>
    </Task>
    <div className="relative flex h-10 w-[49px] shrink-0 items-center justify-center">
      <T>
        <path d="M1 4h8l2 2h12v15h-22z" fill="#fbe08d" /><path d="M2 3h8v2h-8z" fill="#f2b827" />
        <path d="M5 21v-7h14v7h-4v-4h-6v4z" fill="#36a6dc" />
      </T>
      <div className="absolute bottom-0 left-[6px] flex h-0.5 w-10"><div className="w-[31px] bg-[#76b9ed]" /><div className="w-[9px] bg-[#5589b2]" /></div>
    </div>
    <Task>
      <T>
        <path d="M2 6l20-2v20l-20-3z" fill="#fff" /><path d="M7 6c0-6 7-7 8-1M10 5c0-5 5-5 6-1" stroke="#ddd" strokeWidth="1.200" />
        <path d="M5 10l5-.5v4.500h-5zM11 9.400l6-.6v5.200h-6zM5 15h5v4.500l-5-.6zM11 15h6v5.400l-6-.8z" fill="#000" />
      </T>
    </Task>
    <Task>
      <T><path d="M17 0l7 3v18l-7 3-12-11-3 2.500-2-1.200v-4.500l2-1.300 3 2.500zM17 6.500l-7 5.500 7 5.500z" fill="#1b82cc" fillRule="evenodd" /><path d="M18 0l6 3v18l-6 3z" fill="#2aa4ee" /></T>
    </Task>
    <div className="w-px shrink-0" />
    <Task line>
      <T>
        <circle cx="12" cy="12" r="11" fill="#fbc934" />
        <path d="M2.500 6.500a11 11 0 0 1 19 0h-9.500a5.500 5.500 0 0 0-5 3.500z" fill="#db4437" />
        <path d="M2.500 6.500a11 11 0 0 0 8.500 16.500l5-8a5.500 5.500 0 0 1-9-1z" fill="#1b9e5a" />
        <circle cx="12" cy="12" r="5.300" fill="#fff" /><circle cx="12" cy="12" r="4.200" fill="#4285f4" />
      </T>
    </Task>
    <Task>
      <T>
        <path d="M2 5c1 0 2 1 3 2 1-1 2-3 3-3l1 3c3-1 4-3 5-6 2 2 3 3 4 5 0-1 0-2 1-2 3 3 4 6 4 9a11 11 0 0 1-22 0c0-3 .5-6 1-8z" fill="#ff8a1a" />
        <path d="M14 1c2 2 9 4 9 12 0 3-1 6-4 8 2-6-1-11-5-14 0-2-.5-4 0-6z" fill="#ffd93b" />
        <path d="M1.500 14c2 6 12 8 17 3-1 5-13 9-17-3z" fill="#f0294d" />
        <circle cx="12" cy="12.500" r="4.800" fill="#6a3fc0" /><path d="M5 9c4-1 6 1 8 2-2 1-4 0-5 1z" fill="#ff8a1a" />
      </T>
    </Task>
    <Task>
      <T>
        <path d="M12 0l12 12-12 12-12-12z" fill="#eef2fa" />
        <path d="M11 3.500l3.500 3-2.500 3 3.500 2M7 7.500l3.500 3-2.500 3 3 3M15.500 6l3.500 4M4 12l2 2.500" stroke="#3f7be0" strokeWidth="1.800" />
        <path d="M15 14l3 3 3-4-3-2z" fill="#1e3f8c" />
      </T>
    </Task>
    <Task>
      <T>
        <path d="M3 4l4-2 2 2h6l2-2 4 2c2 5 3 12 2.500 17-2 2-4 0-6-6h-11c-2 6-4 8-6 6-.5-5 .5-12 2.500-17z" fill="#f2f2f4" />
        <path d="M4 8h5M6.500 5.500v5" stroke="#333a55" strokeWidth="1.700" />
        <circle cx="17.500" cy="5.800" r="1.200" fill="#3aa878" /><circle cx="20" cy="8" r="1.200" fill="#d0405a" /><circle cx="15.200" cy="8" r="1.200" fill="#c080b0" /><circle cx="17.500" cy="10.300" r="1.200" fill="#4a70c0" />
        <circle cx="9" cy="12.500" r="1.800" fill="#444b60" /><circle cx="15" cy="12.500" r="1.800" fill="#444b60" />
      </T>
    </Task>
    <Task>
      <T>
        <ellipse cx="9" cy="12" rx="8" ry="5" fill="#8f8f94" />
        <ellipse cx="10" cy="6.500" rx="8" ry="5.500" fill="#f4f0f0" stroke="#c62a2a" strokeWidth="1.300" />
        <path d="M4 5l12 9M10 8l4 8" stroke="#777" strokeWidth="1.500" />
        <ellipse cx="19.500" cy="15" rx="3" ry="2" stroke="#2a93c8" strokeWidth="1.500" /><ellipse cx="14" cy="19.500" rx="2" ry="3" stroke="#2a93c8" strokeWidth="1.500" />
      </T>
    </Task>
    <Task>
      <T><rect width="24" height="24" rx="1" fill="#6425c8" /><path d="M5 6.500l10 5.500-10 5.500z" fill="#fff" /><path d="M19 6.500v11l-9-5.500z" fill="#b99be8" opacity=".75" /></T>
    </Task>
    <Task line>
      <T>
        <path d="M0 0h18l6 6v18h-24z" fill="#f68b1f" /><path d="M19 0l5 5h-5z" fill="#d86c10" />
        <path d="M16.500 5.500c-5-3-10 1-9 6 1 4 6 5 9 2v-3h-4" stroke="#fff" strokeWidth="2.300" />
        <text x="6.500" y="22.500" fontSize="5.500" fontWeight="700" fill="#fff" fontFamily="Liberation Sans, sans-serif">PDF</text>
      </T>
    </Task>
    <Task line>
      <T>
        <path d="M4 4h16l1 16h-17z" fill="#62b4e0" stroke="#b8def2" /><path d="M18 4h3v16h-2z" fill="#3d8fc0" />
        <circle cx="10.500" cy="12" r="7" fill="#ef7a1c" stroke="#fbd9b4" /><path d="M8.500 8.500l6 3.500-6 3.500z" fill="#fff" />
      </T>
    </Task>
    <div className="ml-px flex h-10 w-12 shrink-0 flex-col items-center justify-between bg-[#33363a]">
      <div className="flex grow items-center"><Atom s={25} dark /></div>
      <div className="h-0.5 w-full bg-[#76b9ed]" />
    </div>
    <div className="ml-auto flex h-10 items-center">
      <svg width="12" height="7" viewBox="0 0 12 7" fill="none" stroke="#fff" strokeWidth="1.300"><path d="M.5 6.500l5.500-5.500 5.500 5.500" /></svg>
      <svg width="16" height="14" viewBox="0 0 16 14" fill="none" stroke="#fff" className="ml-[10px]"><path d="M.5 5h3l3.500-4v12l-3.500-4h-3z" /><path d="M9 4.500c1 1.500 1 3.500 0 5" /><path d="M11 3c2 2.500 2 5.500 0 8M13.500 1.500c2.500 3 2.500 8 0 11" stroke="#8a8a8a" /></svg>
      <svg width="17" height="14" viewBox="0 0 17 14" fill="none" stroke="#fff" className="ml-2"><rect x="5.500" y="4.500" width="9" height="7" /><rect x="7" y="6" width="6" height="4" fill="#fff" stroke="none" /><path d="M16 6.500v3M1 3h4v3h-4zM3 6v5h2M2 1v2M4 1v2" /></svg>
      <svg width="16" height="17" viewBox="0 0 16 17" fill="none" className="ml-2"><path d="M3 1v5M.8 2.300l4.400 2.500M5.200 2.300l-4.400 2.500" stroke="#fff" /><g stroke="#777"><path d="M3.500 16c0-7 5-11 12-11M6.500 16c0-5 4-8 9-8M9.500 16c0-3 3-5 6-5" /></g><circle cx="14" cy="15" r="1.500" fill="#888" /></svg>
      <div className="ml-2 w-6 text-center text-[11.500px] leading-[18px] tracking-[-0.3px]"><div className="font-['DejaVu_Sans',sans-serif] text-[11px]">فا</div><div>FA</div></div>
      <div className="ml-[9px] w-[58px] text-center text-[12px] leading-[18px] tracking-[-0.5px] whitespace-nowrap"><div>11:20 AM</div><div>5/14/2021</div></div>
      <svg width="27" height="26" viewBox="0 0 27 26" className="ml-[15px]">
        <path d="M1 3h16v13h-9l-4 4v-4h-3z" fill="#fff" /><path d="M4 6.500h10M4 9.500h10M4 12.500h7" stroke="#000" />
        <circle cx="17" cy="17" r="8" fill="#2b2b2b" stroke="#8a8a8a" /><text x="14.200" y="21" fontSize="11" fill="#fff" fontFamily="Open Sans, sans-serif">1</text>
      </svg>
      <div className="mr-1 ml-[10px] h-10 w-px bg-[#555]" />
    </div>
  </div>
);

export default function App() {
  return (
    <div className="flex h-[768px] w-[1366px] flex-col overflow-hidden bg-[#e3eaf1] text-black">
      <header className="flex h-[23px] shrink-0 items-center bg-white pl-0.5 font-['Open_Sans',sans-serif] text-[12px]">
        <Atom s={16} />
        <span className="ml-[5px] tracking-[-0.3px] whitespace-nowrap">1 - Proteus 8 Professional - Schematic Capture</span>
        <svg width="102" height="12" viewBox="0 0 102 12" fill="none" stroke="#000" className="mr-[19px] mb-0.5 ml-auto" shapeRendering="crispEdges">
          <path d="M1 6.500h10" /><path d="M45.500 3.500h7v7h-7zM47.500 3.500v-2h7v7h-2" /><path d="M92 1.500l9 9M101 1.500l-9 9" shapeRendering="auto" strokeWidth="1.200" />
        </svg>
      </header>
      <nav className="flex h-[19px] shrink-0 items-center bg-white pl-[7px] font-['Open_Sans',sans-serif] text-[12px] tracking-[-0.25px]">
        <span className="w-8">File</span><span className="w-[34px]">Edit</span><span className="w-[39px]">View</span>
        <span className="w-[37px]">Tool</span><span className="w-[50px]">Design</span><span className="w-[46px]">Graph</span>
        <span className="w-[49px]">Debug</span><span className="w-[50px]">Library</span><span className="w-[63px]">Template</span>
        <span className="w-[52px]">System</span><span>Help</span>
      </nav>
      <div className="flex h-[28px] shrink-0 items-center border-t border-[#f0f0f0] bg-linear-to-r from-[#e1e9f0] to-[#eaf2f9]">
        <Bar className="w-[338px] pl-[3px]"><Grip /><div className="w-[3px] shrink-0" /><FileIcons /></Bar>
        <Bar className="ml-1 w-[112px] pl-[3px]">
          <Grip />
          <div className="ml-[4px] flex h-[21px] w-[97px] items-center justify-between border-2 border-[#aaadb0] bg-[#e1e1e1] pr-1 pl-[2px] font-['Liberation_Sans',sans-serif] text-[11px] tracking-[-0.2px] whitespace-nowrap">
            Base Design
            <svg width="9" height="6" viewBox="0 0 9 6" fill="none" stroke="#444" strokeWidth="1.200"><path d="M.5 .8l4 4 4-4" /></svg>
          </div>
        </Bar>
        <Bar className="ml-[5px] w-[206px] pl-[3px]"><Grip /><div className="w-1 shrink-0" /><ViewIcons /></Bar>
        <Bar className="ml-1 w-[324px] pl-[3px]"><Grip /><div className="w-1 shrink-0" /><EditIcons /></Bar>
        <Bar className="ml-1 w-[192px] pl-[4px]"><Grip /><div className="w-[3px] shrink-0" /><ToolIcons /></Bar>
      </div>
      <div className="flex h-[28px] shrink-0 items-end bg-linear-to-r from-[#e1e9f0] to-[#eaf2f9]">
        <div className="relative h-[25px] w-[179px] shrink-0">
          <svg width="179" height="25" className="absolute inset-0">
            <defs><linearGradient id="tab" x1="0" y1="0" x2="0" y2="1"><stop offset="0" stopColor="#e3f0f8" /><stop offset="1" stopColor="#bcdcee" /></linearGradient></defs>
            <path d="M0 24.500L20.500 .5H178.500V24.500" fill="url(#tab)" stroke="#5f9bbd" />
          </svg>
          <div className="relative flex h-6 items-center pl-5">
            <I s={17}>{schGlyph}</I>
            <span className="ml-[2px] font-['Liberation_Sans',sans-serif] text-[12px] font-bold tracking-[-0.1px] whitespace-nowrap text-[#1f4b6e]">Schematic Capture</span>
            <svg width="12" height="12" viewBox="0 0 12 12" stroke="#555" strokeWidth="2" className="mt-px ml-[9px]"><path d="M.5 .5l11 11M11.500 .5l-11 11" /></svg>
          </div>
        </div>
        <div className="h-px grow bg-[#5f9bbd]" />
      </div>
      <div className="h-1.5 shrink-0 bg-[#b9d9eb]" />
      <main className="flex h-[597px] shrink-0 items-start">
        <div className="flex h-full w-[58px] shrink-0 items-start bg-[#e1e9f0] pt-px"><ModeBar /><RotateBar /></div>
        <div className="flex h-full w-[121px] shrink-0 flex-col bg-[#e1e9f0]">
          <div className="h-[101px] border border-[#6d6d6d]"><Overview /></div>
          <div className="h-1" />
          <div className="flex grow flex-col border border-[#6d6d6d] bg-white">
            <div className="flex h-[24px] shrink-0 items-center border-b border-[#6d6d6d] bg-linear-to-b from-[#e6f2f9] to-[#b2d3e6] pl-[3px] font-['Roboto',sans-serif] text-[12px]">
              <span className="flex h-[15px] w-[15px] items-center justify-center rounded-[3px] bg-[#0a50d8] text-[14px] text-white">C</span>
              <span className="ml-[5px] flex h-[15px] w-[15px] items-center justify-center rounded-[3px] bg-[#0a50d8] text-[14px] text-white">E</span>
              <span className="ml-[15px] tracking-[-0.3px]">GRAPHICS</span>
            </div>
            <ul className="flex flex-col pt-px font-['Roboto',sans-serif] text-[12px] leading-[13px] tracking-[-0.25px]">
              {objects.map((o, i) => (
                <li key={o} className={i === 0 ? "mx-px h-[13px] bg-[#3399ff] pl-px tracking-[-0.45px] text-white" : "mx-px h-[13px] pl-[2px]"}>{o}</li>
              ))}
            </ul>
          </div>
        </div>
        <div className="h-full w-1 shrink-0 bg-[#a9cade]" />
        <div className="h-full w-[1179px] shrink-0 border border-[#6d6d6d]"><Schematic /></div>
        <div className="h-full grow bg-[#b3d3e7]" />
      </main>
      <footer className="flex h-[27px] shrink-0 items-end bg-[#e3eaf1] font-['Liberation_Sans',sans-serif] text-[11px]">
        <Bar className="w-[258px] pl-[3px]">
          <Grip />
          <svg width="150" height="20" viewBox="7 0 150 20" fill="#0a5fd0" stroke="#083f90" strokeWidth=".6" className="shrink-0">
            <path d="M25 3.500l8 6.500-8 6.500zM60 3.500h2v13h-2zM64 3.500l8 6.500-8 6.500zM97 3.500h2.500v13h-2.500zM102 3.500h2.500v13h-2.500zM131 4h12.500v12.500h-12.500z" />
          </svg>
          <Sep />
          <svg width="14" height="14" viewBox="0 0 14 14" className="ml-[5px] shrink-0"><circle cx="7" cy="7" r="6.500" fill="#444" /><path d="M7 6v5M7 3v1.600M5 6.500h2M5 11h4" stroke="#fff" strokeWidth="1.600" /></svg>
          <span className="ml-[6px] tracking-[-0.25px] whitespace-nowrap text-[#8b9298]">No Messages</span>
        </Bar>
        <Bar className="ml-[5px] w-[412px] pl-[3px]"><Grip /><span className="ml-[6px] tracking-[-0.15px]">Root sheet 1</span></Bar>
        <Bar className="ml-[5px] grow pl-[3px]">
          <Grip />
          <span className="ml-[290px] w-[322px] tracking-[-0.15px]">-1600.0</span>
          <span className="w-[55px] tracking-[-0.15px]">+3200.0</span>
          <span className="text-[#0a0a96]">th</span>
        </Bar>
      </footer>
      <Taskbar />
    </div>
  );
}
